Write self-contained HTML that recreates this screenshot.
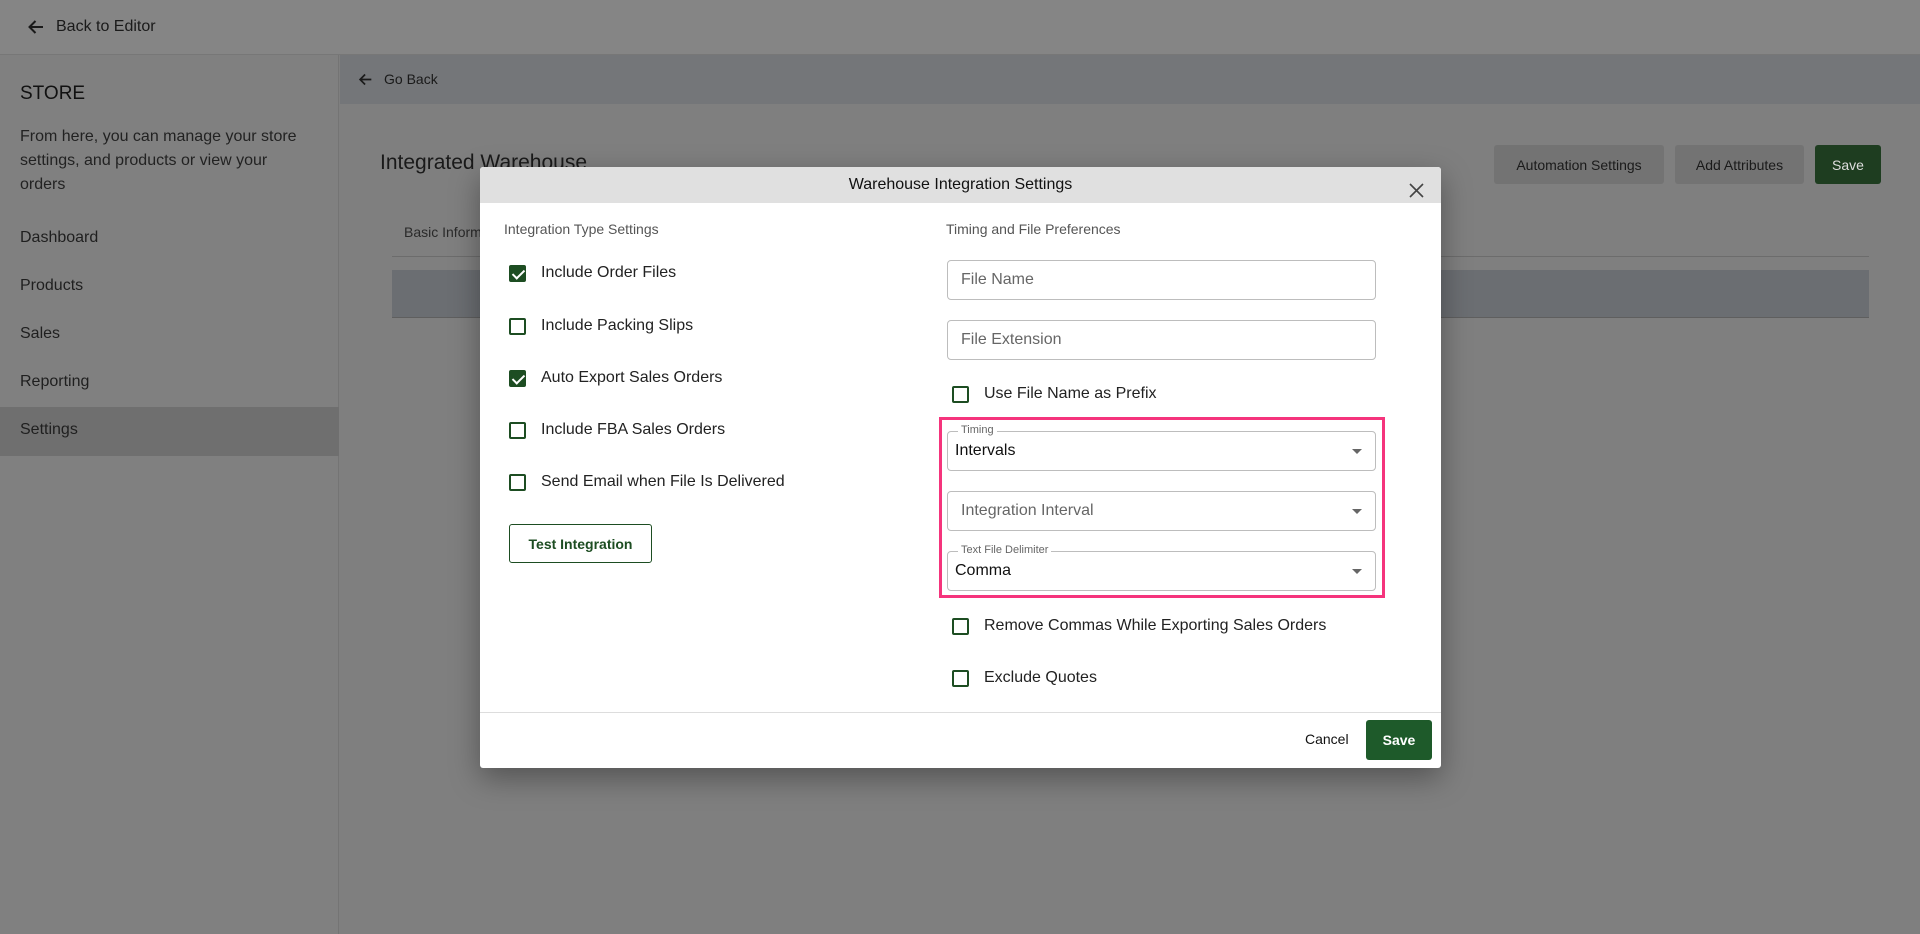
<!DOCTYPE html>
<html><head><meta charset="utf-8"><style>
*{box-sizing:border-box;margin:0;padding:0}
body{width:1920px;height:934px;overflow:hidden;font-family:"Liberation Sans",sans-serif;background:#7f7f7f;position:relative;color:#222}
.abs{position:absolute}
.top{left:0;top:0;width:1920px;height:55px;background:#858585;border-bottom:1px solid #777}
.side{left:0;top:55px;width:339px;height:879px;background:#808080;border-right:1px solid #747474}
.main{left:340px;top:55px;width:1580px;height:879px;background:#7f7f7f}
.gobar{left:340px;top:55px;width:1580px;height:49px;background:#747679}
.t{position:absolute;white-space:nowrap}
.nav{font-size:16px;color:#1f1f1f;left:20px}
.btn{position:absolute;top:145px;height:39px;background:#737373;border-radius:3px;font-size:14px;color:#1a1a1a;display:flex;align-items:center;justify-content:center}
.modal{left:480px;top:167px;width:961px;height:601px;background:#fff;border-radius:3px;box-shadow:0 10px 30px rgba(0,0,0,.35)}
.mh{left:0;top:0;width:961px;height:36px;background:#e0e0e0;border-radius:3px 3px 0 0}
.cb{position:absolute;width:17px;height:17px;border:2px solid #1d4d22;border-radius:2px;background:#fff}
.cb.on{background:#1d4d22}
.cb.on::after{content:"";position:absolute;left:4px;top:0px;width:5px;height:10px;border:solid #fff;border-width:0 2px 2px 0;transform:rotate(45deg)}
.lbl{position:absolute;font-size:16px;color:#222;white-space:nowrap}
.inp{position:absolute;left:467px;width:429px;height:40px;border:1px solid #bdbdbd;border-radius:4px;background:#fff}
.ph{position:absolute;left:13px;top:10px;font-size:16px;color:#666}
.val{position:absolute;left:7px;top:10px;font-size:16px;color:#111}
.fl{position:absolute;left:10px;top:-8px;font-size:11px;color:#666;background:#fff;padding:0 3px}
.car{position:absolute;right:13px;top:17px;width:0;height:0;border-left:5px solid transparent;border-right:5px solid transparent;border-top:5px solid #666}
</style></head><body>
<div class="abs top"></div>
<svg class="abs" style="left:27px;top:18px" width="18" height="18" viewBox="0 0 18 18"><path d="M16 9H3M8.5 3L2.5 9l6 6" stroke="#1a1a1a" stroke-width="2" fill="none"/></svg>
<div class="t" style="left:56px;top:18px;font-size:16px;color:#1a1a1a">Back to Editor</div>
<div class="abs side"></div>
<div class="abs" style="left:0;top:407px;width:339px;height:49px;background:#6f6f6f"></div>
<div class="t" style="left:20px;top:83px;font-size:19px;color:#111">STORE</div>
<div class="t" style="left:20px;top:125px;font-size:16px;line-height:24px;color:#222;white-space:normal;width:290px">From here, you can manage your store settings, and products or view your orders</div>
<div class="t nav" style="top:229px">Dashboard</div>
<div class="t nav" style="top:277px">Products</div>
<div class="t nav" style="top:325px">Sales</div>
<div class="t nav" style="top:373px">Reporting</div>
<div class="t nav" style="top:421px">Settings</div>
<div class="abs main"></div>
<div class="abs gobar"></div>
<svg class="abs" style="left:358px;top:72px" width="15" height="15" viewBox="0 0 18 18"><path d="M16 9H3M8.5 3L2.5 9l6 6" stroke="#1a1a1a" stroke-width="2" fill="none"/></svg>
<div class="t" style="left:384px;top:71px;font-size:14px;color:#1a1a1a">Go Back</div>
<div class="t" style="left:380px;top:151px;font-size:21px;color:#1a1a1a">Integrated Warehouse</div>
<div class="btn" style="left:1494px;width:170px">Automation Settings</div>
<div class="btn" style="left:1675px;width:129px">Add Attributes</div>
<div class="btn" style="left:1815px;width:66px;background:#1e3d20;color:#ddd">Save</div>
<div class="t" style="left:404px;top:224px;font-size:14px;color:#2a2a2a">Basic Information</div>
<div class="abs" style="left:392px;top:256px;width:1477px;height:1px;background:#6c6c6c"></div>
<div class="abs" style="left:392px;top:270px;width:1477px;height:48px;background:#6b6e72;border-bottom:1px solid #5f5f5f"></div>

<div class="abs modal">
 <div class="abs mh"></div>
 <div class="t" style="left:0;width:961px;text-align:center;top:9px;font-size:16px;color:#111">Warehouse Integration Settings</div>
 <svg class="abs" style="left:929px;top:16px" width="15" height="15" viewBox="0 0 15 15"><path d="M1 1L14 14M14 1L1 14" stroke="#444" stroke-width="1.6"/></svg>
 <div class="t" style="left:24px;top:54px;font-size:14px;color:#555">Integration Type Settings</div>
 <div class="cb on" style="left:29px;top:98px"></div><div class="lbl" style="left:61px;top:97px">Include Order Files</div>
 <div class="cb" style="left:29px;top:151px"></div><div class="lbl" style="left:61px;top:150px">Include Packing Slips</div>
 <div class="cb on" style="left:29px;top:203px"></div><div class="lbl" style="left:61px;top:202px">Auto Export Sales Orders</div>
 <div class="cb" style="left:29px;top:255px"></div><div class="lbl" style="left:61px;top:254px">Include FBA Sales Orders</div>
 <div class="cb" style="left:29px;top:307px"></div><div class="lbl" style="left:61px;top:306px">Send Email when File Is Delivered</div>
 <div class="abs" style="left:29px;top:357px;width:143px;height:39px;border:1px solid #1d4d22;border-radius:3px;font-size:14px;font-weight:bold;color:#1d4d22;display:flex;align-items:center;justify-content:center">Test Integration</div>

 <div class="t" style="left:466px;top:54px;font-size:14px;color:#555">Timing and File Preferences</div>
 <div class="inp" style="top:93px"><div class="ph">File Name</div></div>
 <div class="inp" style="top:153px"><div class="ph">File Extension</div></div>
 <div class="cb" style="left:472px;top:219px"></div><div class="lbl" style="left:504px;top:218px">Use File Name as Prefix</div>
 <div class="abs" style="left:459px;top:250px;width:446px;height:181px;border:3px solid #f5347c"></div>
 <div class="inp" style="top:264px"><div class="fl">Timing</div><div class="val">Intervals</div><div class="car"></div></div>
 <div class="inp" style="top:324px"><div class="ph">Integration Interval</div><div class="car"></div></div>
 <div class="inp" style="top:384px"><div class="fl">Text File Delimiter</div><div class="val">Comma</div><div class="car"></div></div>
 <div class="cb" style="left:472px;top:451px"></div><div class="lbl" style="left:504px;top:450px">Remove Commas While Exporting Sales Orders</div>
 <div class="cb" style="left:472px;top:503px"></div><div class="lbl" style="left:504px;top:502px">Exclude Quotes</div>
 <div class="abs" style="left:0;top:545px;width:961px;height:1px;background:#ddd"></div>
 <div class="t" style="left:825px;top:564px;font-size:14px;color:#111">Cancel</div>
 <div class="abs" style="left:886px;top:553px;width:66px;height:40px;background:#1e5a2a;border-radius:3px;color:#fff;font-size:14px;font-weight:bold;display:flex;align-items:center;justify-content:center">Save</div>
</div>
</body></html>
